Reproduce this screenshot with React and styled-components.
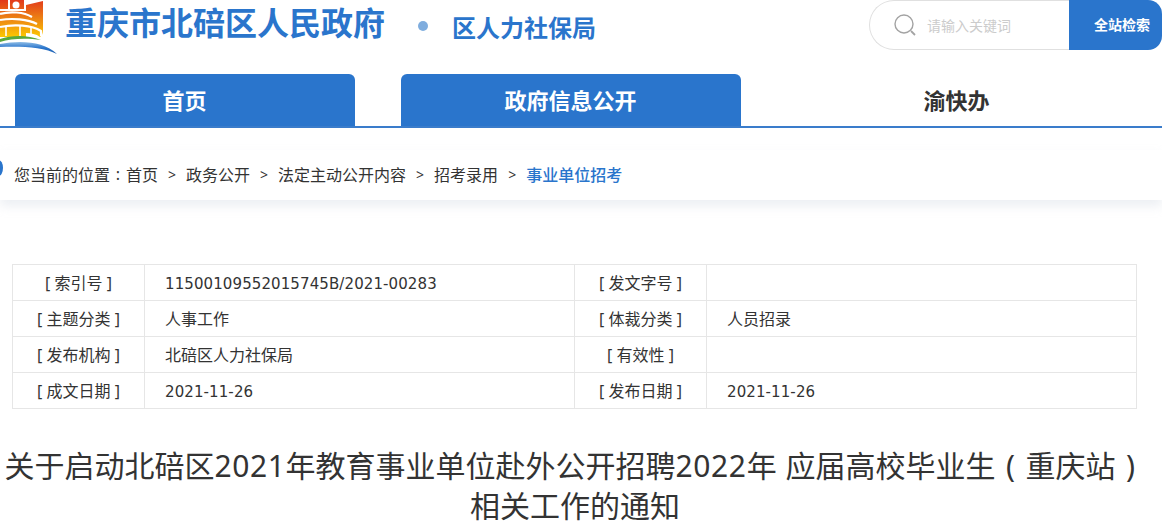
import React from 'react';
import styled, { createGlobalStyle } from 'styled-components';

const GlobalStyle = createGlobalStyle`
  html, body { margin: 0; padding: 0; background: #fff; overflow: hidden; }
  body { font-family: "Noto Sans", "Noto Sans CJK SC", sans-serif; color: #333; }
`;

const Page = styled.div`
  width: 1162px;
`;

const Header = styled.header`
  display: flex;
  height: 74px;
`;

const Brand = styled.div`
  display: flex;
  align-items: flex-start;
  flex: 1;
`;

const Site = styled.h1`
  margin: 2px 0 0 8px;
  font-size: 32px;
  line-height: 42px;
  font-weight: 700;
  color: #2a75cc;
`;

const Dot = styled.i`
  width: 10px;
  height: 10px;
  margin: 21px 24px 0 33px;
  border-radius: 50%;
  background: #7fadde;
`;

const Dept = styled.h2`
  margin: 10px 0 0;
  font-size: 24px;
  line-height: 36px;
  font-weight: 700;
  color: #2a75cc;
`;

const Search = styled.div`
  display: flex;
  width: 293px;
  height: 50px;
`;

const SearchField = styled.div`
  display: flex;
  align-items: center;
  gap: 11px;
  flex: 1;
  padding-left: 24px;
  box-sizing: border-box;
  border: 1px solid #e0e0e0;
  border-right: 0;
  border-radius: 25px 0 0 25px;
  font-size: 14px;
  color: #ccc;
`;

const SearchButton = styled.button`
  width: 93px;
  height: 50px;
  padding: 0 0 2px 13px;
  border: 0;
  border-radius: 0 14px 14px 0;
  background: #2a75cc;
  color: #fff;
  font: 700 14px "Noto Sans CJK SC", sans-serif;
`;

const Nav = styled.nav`
  display: flex;
  gap: 46px;
  height: 52px;
  padding-left: 15px;
  border-bottom: 2px solid #3a7ccb;
`;

const Tab = styled.a`
  display: flex;
  align-items: center;
  justify-content: center;
  width: 340px;
  padding: 0 1px 2px 0;
  box-sizing: border-box;
  border-radius: 6px 6px 0 0;
  font-size: 22px;
  font-weight: 700;
  color: ${p => (p.$active ? '#fff' : '#333')};
  background: ${p => (p.$active ? '#2a75cc' : 'transparent')};
`;

const Crumbs = styled.div`
  position: relative;
  display: flex;
  align-items: center;
  height: 50px;
  margin-top: 22px;
  padding: 0 0 2px 14px;
  box-sizing: border-box;
  font-size: 16px;
  color: #333;
  box-shadow: 0 6px 10px rgba(200, 208, 220, 0.35);
`;

const CrumbMark = styled.i`
  position: absolute;
  left: -6px;
  top: 10px;
  width: 9px;
  height: 16px;
  border-radius: 50%;
  background: #2a75cc;
`;

const Sep = styled.span`
  margin: 0 10px;
  font-size: 14px;
`;

const Current = styled.span`
  color: #2a75cc;
  font-weight: 500;
`;

// full-width punctuation drawn centred in its em box
const Punct = styled.span`
  display: inline-block;
  width: 1em;
  text-align: center;
`;

const Meta = styled.table`
  width: 1125px;
  margin: 64px 0 0 12px;
  border-collapse: collapse;
  table-layout: fixed;
  font-size: 16px;
  color: #333;
`;

const Label = styled.td`
  height: 33px;
  padding: 0 0 2px;
  border: 1px solid #e6e6e6;
  text-align: center;
`;

const Value = styled.td`
  padding: 0 0 2px 20px;
  border: 1px solid #e6e6e6;
  ${p => p.$latin && 'padding-top: 2px; padding-bottom: 0; font-family: "DejaVu Sans", sans-serif; font-size: 15px; letter-spacing: 0.1px;'}
`;

const Title = styled.h3`
  width: 1150px;
  margin: 37px 0 0;
  font-size: 30px;
  line-height: 40px;
  font-weight: 400;
  text-align: center;
  word-spacing: 1px;
  color: #333;
`;

const Year = styled.span`
  letter-spacing: 0.6px;
`;

const Logo = () => (
  <svg width="57" height="56" viewBox="0 0 57 56">
    <defs>
      <linearGradient id="lg" x1="0" y1="0" x2="0" y2="1">
        <stop offset="0" stopColor="#e23a1c" />
        <stop offset="0.55" stopColor="#ee8a12" />
        <stop offset="1" stopColor="#fcc800" />
      </linearGradient>
      <linearGradient id="arc" x1="0" y1="0" x2="0" y2="1">
        <stop offset="0" stopColor="#8fbde6" />
        <stop offset="0.5" stopColor="#2a75cc" />
        <stop offset="1" stopColor="#1f5fae" />
      </linearGradient>
    </defs>
    <path d="M0 0 H8 V9 H0 Z M10 0 H24 V9 H10 Z M26 5 L43 1 V30 Q43 35 40 37 C36 34 31 33 26 33 Z M0 11 H26 V37 H0 Z" fill="url(#lg)" />
    <path d="M24 11 H26 V5 H24 Z" fill="#fff" />
    <circle cx="16" cy="5" r="3.5" fill="#fff" />
    <path d="M0 14 C10 11 24 12 32 17" stroke="#fff" strokeWidth="2.2" fill="none" />
    <path d="M0 20 C12 18 28 19 37 24" stroke="#fff" strokeWidth="2.2" fill="none" />
    <path d="M0 27 C14 24 32 25 41 31 V36" stroke="#fff" strokeWidth="2.2" fill="none" />
    <path d="M6 27 V36 M20 26 V36 M31 27 V35" stroke="#fff" strokeWidth="1.6" />
    <path d="M0 39 C12 35 28 35 41 40 C28 38 12 38 0 42 Z" fill="#5aa83c" />
    <path d="M0 44 C20 40 44 41 57 54 C44 47 20 46 0 47 Z" fill="url(#arc)" />
  </svg>
);

const SearchIcon = () => (
  <svg width="22" height="22" viewBox="0 0 22 22" fill="none" stroke="#a3a3a3">
    <circle cx="10" cy="10" r="9" strokeWidth="1.4" />
    <path d="M17 17 L21 21" strokeWidth="1.8" />
  </svg>
);

const crumbs = ['首页', '政务公开', '法定主动公开内容', '招考录用'];

const rows = [
  ['[ 索引号 ]', '11500109552015745B/2021-00283', '[ 发文字号 ]', ''],
  ['[ 主题分类 ]', '人事工作', '[ 体裁分类 ]', '人员招录'],
  ['[ 发布机构 ]', '北碚区人力社保局', '[ 有效性 ]', ''],
  ['[ 成文日期 ]', '2021-11-26', '[ 发布日期 ]', '2021-11-26'],
];

const isLatin = text => /^[\w/-]+$/.test(text);

export default function App() {
  return (
    <Page>
      <GlobalStyle />
      <Header>
        <Brand>
          <Logo />
          <Site>重庆市北碚区人民政府</Site>
          <Dot />
          <Dept>区人力社保局</Dept>
        </Brand>
        <Search>
          <SearchField>
            <SearchIcon />
            请输入关键词
          </SearchField>
          <SearchButton>全站检索</SearchButton>
        </Search>
      </Header>
      <Nav>
        <Tab $active>首页</Tab>
        <Tab $active>政府信息公开</Tab>
        <Tab>渝快办</Tab>
      </Nav>
      <Crumbs>
        <CrumbMark />
        您当前的位置<Punct>:</Punct>
        {crumbs.map(c => (
          <React.Fragment key={c}>
            {c}
            <Sep>&gt;</Sep>
          </React.Fragment>
        ))}
        <Current>事业单位招考</Current>
      </Crumbs>
      <Meta>
        <colgroup>
          <col style={{ width: 132 }} />
          <col style={{ width: 430 }} />
          <col style={{ width: 132 }} />
          <col />
        </colgroup>
        <tbody>
          {rows.map(r => (
            <tr key={r[0]}>
              <Label>{r[0]}</Label>
              <Value $latin={isLatin(r[1])}>{r[1]}</Value>
              <Label>{r[2]}</Label>
              <Value $latin={isLatin(r[3])}>{r[3]}</Value>
            </tr>
          ))}
        </tbody>
      </Meta>
      <Title>
        关于启动北碚区<Year>2021</Year>年教育事业单位赴外公开招聘<Year>2022</Year>年 应届高校毕业生<Punct>(</Punct>重庆站<Punct>)</Punct>相关工作的通知
      </Title>
    </Page>
  );
}
